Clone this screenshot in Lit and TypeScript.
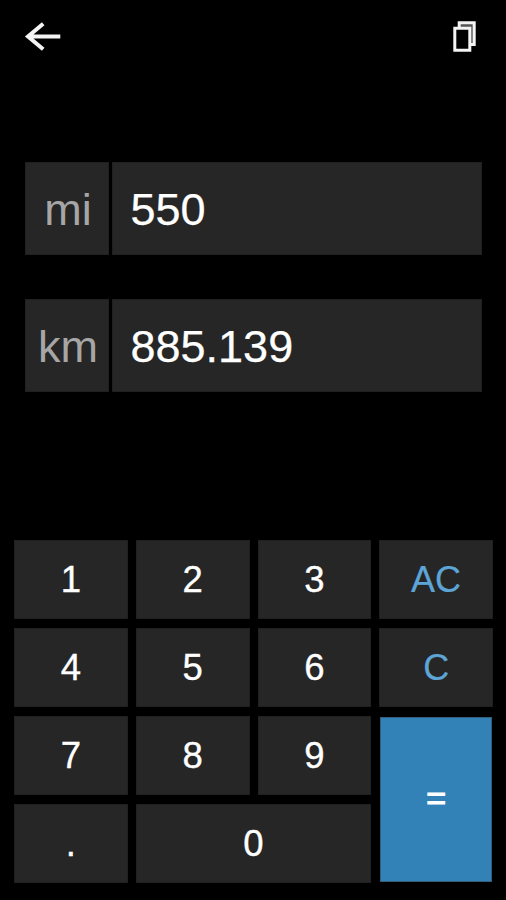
import { LitElement, html, css } from "lit";
import { customElement, state } from "lit/decorators.js";

@customElement("app-root")
export class AppRoot extends LitElement {
  @state() private rows = [
    { unit: "mi", value: "550" },
    { unit: "km", value: "885.139" },
  ];

  static styles = css`
    :host {
      display: block;
      height: 900px;
      background: #000;
      color: #fff;
      font-family: "Liberation Sans", Arial, sans-serif;
    }
    .screen {
      display: flex;
      flex-direction: column;
      box-sizing: border-box;
      height: 900px;
      padding: 0 14px 17px;
    }
    header {
      display: flex;
      justify-content: space-between;
      align-items: center;
      height: 72px;
      padding: 0 13px 0 10px;
    }
    svg {
      display: block;
      fill: none;
      stroke: #f4f4f4;
    }
    .fields {
      display: flex;
      flex-direction: column;
      gap: 44px;
      margin-top: 90px;
      padding: 0 10px 0 11px;
    }
    .row {
      display: grid;
      grid-template-columns: 84px 1fr;
      gap: 3px;
      height: 93px;
      font-size: 45px;
    }
    .unit,
    .value,
    .key {
      display: flex;
      align-items: center;
      box-sizing: border-box;
      background: #262626;
      border: 1px solid #202020;
      padding-top: 2px;
    }
    .unit {
      justify-content: center;
      padding-left: 2px;
      color: #a6a6a6;
    }
    .value {
      padding-left: 17.5px;
      -webkit-text-stroke: 0.25px #fff;
    }
    .pad {
      display: grid;
      grid-template-columns: repeat(4, 1fr);
      grid-template-rows: repeat(4, 79px);
      gap: 9px 8px;
      margin-top: auto;
      margin-right: -1px;
    }
    .key {
      justify-content: center;
      padding-top: 1px;
      font-size: 36.5px;
      -webkit-text-stroke: 0.35px currentColor;
    }
    .blue {
      color: #5da5d6;
      font-size: 36px;
      -webkit-text-stroke-width: 0.2px;
    }
    .equals {
      grid-area: 3 / 4 / 5 / 5;
      margin: 1px;
      padding: 0 0 2px;
      background: #3282b8;
      border-color: #345d7a;
      font-size: 34px;
      -webkit-text-stroke-width: 1.2px;
    }
    .zero {
      grid-column: 2 / 4;
    }
  `;

  render() {
    const keys = [
      ["1"], ["2"], ["3"], ["AC", "blue"],
      ["4"], ["5"], ["6"], ["C", "blue"],
      ["7"], ["8"], ["9"], ["=", "equals"],
      ["."], ["0", "zero"],
    ];
    return html`<div class="screen">
      <header>
        <svg width="38" height="32" viewBox="0 0 38 32" stroke-width="4">
          <path d="M36.3 16.5H4M19.2 3.7L4 16.5l15.2 12.8" />
        </svg>
        <svg width="28" height="32" viewBox="0 0 28 32" stroke-width="3">
          <path d="M8.2 2.8h15v21.7h-15z" fill="#555" />
          <path d="M3.8 8.2h15v22h-15z" fill="#000" />
        </svg>
      </header>
      <div class="fields">
        ${this.rows.map((r) => html`<div class="row">
          <div class="unit">${r.unit}</div><div class="value">${r.value}</div>
        </div>`)}
      </div>
      <div class="pad">
        ${keys.map(([label, kind = ""]) => html`<div class="key ${kind}">${label}</div>`)}
      </div>
    </div>`;
  }
}
